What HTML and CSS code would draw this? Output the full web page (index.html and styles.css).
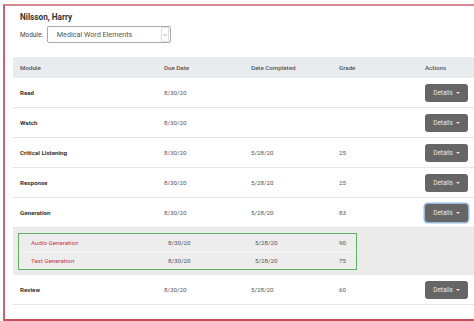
FILE: index.html
```html
<!DOCTYPE html>
<html>
<head>
<meta charset="utf-8">
<link rel="stylesheet" href="styles.css">
</head>
<body>
<div class="frame">
  <div class="title">Nilsson, Harry</div>
  <div class="module-row">
    <span class="module-label">Module:</span>
    <div class="select">
      <span class="select-text">Medical Word Elements</span>
      <span class="select-arrow"><svg width="4" height="4" viewBox="0 0 4 4"><path d="M0.5 1.2 L2 2.8 L3.5 1.2" fill="none" stroke="#999" stroke-width="0.8"/></svg></span>
    </div>
  </div>
  <div class="table">
    <div class="row head">
      <div class="cell">Module</div>
      <div class="cell">Due Date</div>
      <div class="cell">Date Completed</div>
      <div class="cell">Grade</div>
      <div class="cell">Actions</div>
    </div>
    <div class="row">
      <div class="cell name">Read</div>
      <div class="cell">8/30/20</div>
      <div class="cell"></div>
      <div class="cell"></div>
      <div class="cell"><button class="btn">Details <span class="caret"></span></button></div>
    </div>
    <div class="row">
      <div class="cell name">Watch</div>
      <div class="cell">8/30/20</div>
      <div class="cell"></div>
      <div class="cell"></div>
      <div class="cell"><button class="btn">Details <span class="caret"></span></button></div>
    </div>
    <div class="row">
      <div class="cell name">Critical Listening</div>
      <div class="cell">8/30/20</div>
      <div class="cell">5/28/20</div>
      <div class="cell">25</div>
      <div class="cell"><button class="btn">Details <span class="caret"></span></button></div>
    </div>
    <div class="row">
      <div class="cell name">Response</div>
      <div class="cell">8/30/20</div>
      <div class="cell">5/28/20</div>
      <div class="cell">25</div>
      <div class="cell"><button class="btn">Details <span class="caret"></span></button></div>
    </div>
    <div class="row">
      <div class="cell name">Generation</div>
      <div class="cell">8/30/20</div>
      <div class="cell">5/28/20</div>
      <div class="cell">83</div>
      <div class="cell"><button class="btn focus">Details <span class="caret"></span></button></div>
    </div>
    <div class="sub">
      <div class="subbox">
        <div class="subrow">
          <div class="scell red">Audio Generation</div>
          <div class="scell">8/30/20</div>
          <div class="scell">5/28/20</div>
          <div class="scell">90</div>
        </div>
        <div class="subrow">
          <div class="scell red">Text Generation</div>
          <div class="scell">8/30/20</div>
          <div class="scell">5/28/20</div>
          <div class="scell">75</div>
        </div>
      </div>
    </div>
    <div class="row">
      <div class="cell name">Review</div>
      <div class="cell">8/30/20</div>
      <div class="cell">5/28/20</div>
      <div class="cell">60</div>
      <div class="cell"><button class="btn">Details <span class="caret"></span></button></div>
    </div>
  </div>
</div>
</body>
</html>
```

FILE: styles.css
```css
html, body {
  margin: 0;
  padding: 0;
  background: #fff;
  overflow: hidden;
}
body {
  font-family: Roboto, "Liberation Sans", sans-serif;
  color: #555;
}
.frame {
  margin: 4px 0 0 3px;
  border: 2px solid #d68792;
  border-right: none;
  border-left-color: #c9627a;
  border-bottom: 3px solid #c8505b;
  padding: 6px 0 14px 8px;
}
.title {
  margin-left: 7px;
  font-size: 8.2px;
  line-height: 11px;
  font-weight: 700;
  color: #333;
}
.module-row {
  margin: 3px 0 0 7px;
  display: flex;
  align-items: center;
  gap: 4px;
  height: 17px;
}
.module-label {
  font-size: 6.4px;
  color: #444;
}
.select {
  width: 113px;
  height: 15px;
  border: 1px solid #a9a9a9;
  border-radius: 2px;
  display: flex;
  align-items: center;
  justify-content: space-between;
  padding-left: 9px;
  box-sizing: content-box;
}
.select-text {
  font-size: 7.2px;
  color: #555;
}
.select-arrow {
  width: 6px;
  height: 13px;
  margin-right: 1px;
  border: 1px solid #ddd;
  border-radius: 1px;
  display: flex;
  align-items: center;
  justify-content: center;
}
.table {
  margin-top: 14px;
}
.row {
  display: grid;
  grid-template-columns: 144px 87px 88px 86px 1fr;
  height: 29px;
  border-bottom: 1px solid #e3e5e8;
  align-items: center;
}
.row.head {
  height: 21px;
  background: #e9ecef;
  border-bottom: none;
  font-weight: 500;
  color: #555;
}
.cell {
  padding-left: 7px;
  font-size: 6.2px;
}
.cell.name {
  font-weight: 700;
  color: #333;
}
.btn {
  width: 43px;
  height: 18px;
  margin-top: 1px;
  border: none;
  border-radius: 3px;
  background: #666666;
  color: #e6e6e6;
  font-family: Roboto, "Liberation Sans", sans-serif;
  font-size: 6.4px;
  padding: 0;
  display: flex;
  align-items: center;
  justify-content: center;
  gap: 3px;
}
.btn.focus {
  box-shadow: 0 0 0 1.5px #9ab8dc;
}
.caret {
  width: 0;
  height: 0;
  border-left: 2.2px solid transparent;
  border-right: 2.2px solid transparent;
  border-top: 2.5px solid #e6e6e6;
}
.sub {
  background: #ebebeb;
  padding: 5px 0 5px 5px;
}
.subbox {
  width: 337px;
  border: 1px solid #5fb060;
  background: #ededed;
}
.subrow {
  display: grid;
  grid-template-columns: 137px 87px 84px 1fr;
  height: 17px;
  align-items: center;
}
.subrow + .subrow {
  border-top: 1px solid #f6f6f6;
}
.scell {
  padding-left: 12px;
  font-size: 6.2px;
  color: #555;
}
.scell.red {
  color: #c23a52;
}
```
